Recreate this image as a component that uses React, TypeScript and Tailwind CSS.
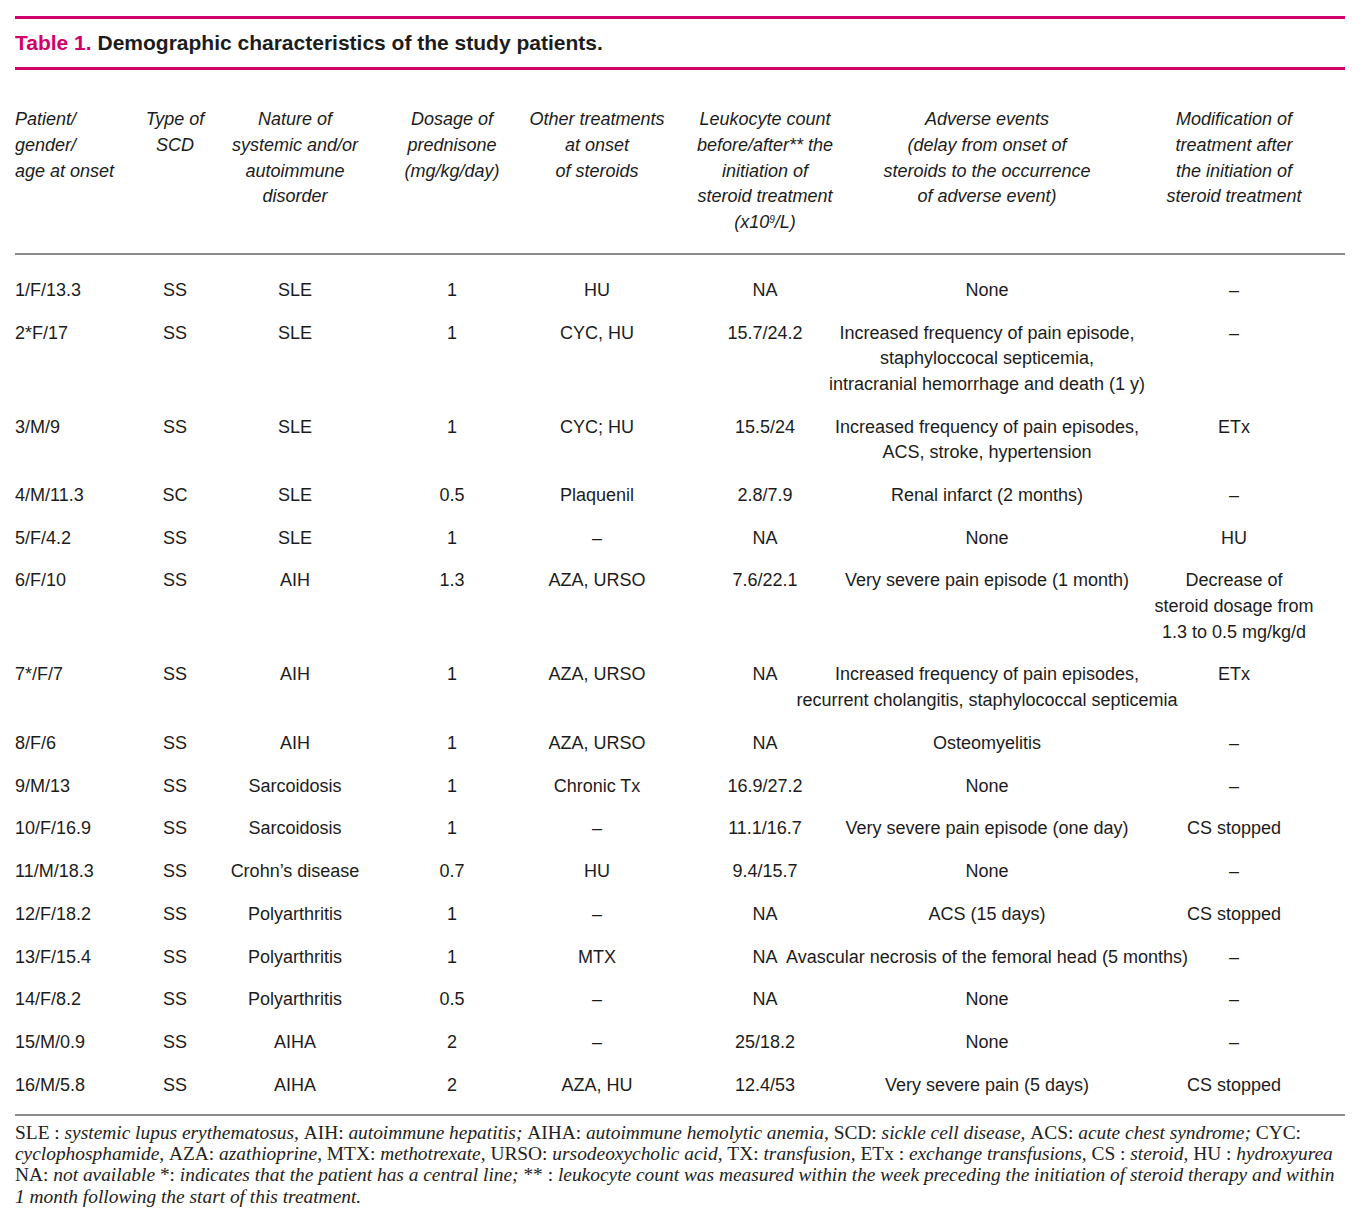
type Cell = string | string[];

const rows: Cell[][] = [
  ["1/F/13.3", "SS", "SLE", "1", "HU", "NA", "None", "–"],
  [
    "2*F/17",
    "SS",
    "SLE",
    "1",
    "CYC, HU",
    "15.7/24.2",
    ["Increased frequency of pain episode,", "staphyloccocal septicemia,", "intracranial hemorrhage and death (1 y)"],
    "–",
  ],
  [
    "3/M/9",
    "SS",
    "SLE",
    "1",
    "CYC; HU",
    "15.5/24",
    ["Increased frequency of pain episodes,", "ACS, stroke, hypertension"],
    "ETx",
  ],
  ["4/M/11.3", "SC", "SLE", "0.5", "Plaquenil", "2.8/7.9", "Renal infarct (2 months)", "–"],
  ["5/F/4.2", "SS", "SLE", "1", "–", "NA", "None", "HU"],
  [
    "6/F/10",
    "SS",
    "AIH",
    "1.3",
    "AZA, URSO",
    "7.6/22.1",
    "Very severe pain episode (1 month)",
    ["Decrease of", "steroid dosage from", "1.3 to 0.5 mg/kg/d"],
  ],
  [
    "7*/F/7",
    "SS",
    "AIH",
    "1",
    "AZA, URSO",
    "NA",
    ["Increased frequency of pain episodes,", "recurrent cholangitis, staphylococcal septicemia"],
    "ETx",
  ],
  ["8/F/6", "SS", "AIH", "1", "AZA, URSO", "NA", "Osteomyelitis", "–"],
  ["9/M/13", "SS", "Sarcoidosis", "1", "Chronic Tx", "16.9/27.2", "None", "–"],
  ["10/F/16.9", "SS", "Sarcoidosis", "1", "–", "11.1/16.7", "Very severe pain episode (one day)", "CS stopped"],
  ["11/M/18.3", "SS", "Crohn’s disease", "0.7", "HU", "9.4/15.7", "None", "–"],
  ["12/F/18.2", "SS", "Polyarthritis", "1", "–", "NA", "ACS (15 days)", "CS stopped"],
  ["13/F/15.4", "SS", "Polyarthritis", "1", "MTX", "NA", "Avascular necrosis of the femoral head (5 months)", "–"],
  ["14/F/8.2", "SS", "Polyarthritis", "0.5", "–", "NA", "None", "–"],
  ["15/M/0.9", "SS", "AIHA", "2", "–", "25/18.2", "None", "–"],
  ["16/M/5.8", "SS", "AIHA", "2", "AZA, HU", "12.4/53", "Very severe pain (5 days)", "CS stopped"],
];

// column template shared by header and body
const cols = "grid grid-cols-[120px_80px_160px_154px_136px_200px_244px_236px]";

function Lines({ value }: { value: Cell }) {
  const lines = Array.isArray(value) ? value : [value];
  return (
    <>
      {lines.map((l, i) => (
        <span key={i} className="whitespace-nowrap">
          {l}
        </span>
      ))}
    </>
  );
}

function cellClass(i: number) {
  if (i === 0) return "flex flex-col items-start";
  if (i === 7) return "flex flex-col items-center pl-[14px]";
  return "flex flex-col items-center";
}

export default function App() {
  return (
    <div className="min-h-[1231px] w-[1368px] bg-white text-[#1c1c1c] font-['Liberation_Sans',Arial,sans-serif]">
      <div className="ml-[15px] w-[1330px] pt-[16px]">
        {/* Title */}
        <div className="h-[3px] bg-[#d1006b]" />
        <h1 className="text-[21px] leading-[48px] font-semibold">
          <span className="text-[#d1006b]">Table 1.</span> Demographic characteristics of the study patients.
        </h1>
        <div className="h-[3px] bg-[#d1006b]" />

        {/* Header */}
        <div className={`${cols} pt-[37px] pb-[17px] text-[18px] leading-[25.75px] italic`}>
          <div className={cellClass(0)}>
            <Lines value={["Patient/", "gender/", "age at onset"]} />
          </div>
          <div className={cellClass(1)}>
            <Lines value={["Type of", "SCD"]} />
          </div>
          <div className={cellClass(2)}>
            <Lines value={["Nature of", "systemic and/or", "autoimmune", "disorder"]} />
          </div>
          <div className={cellClass(3)}>
            <Lines value={["Dosage of", "prednisone", "(mg/kg/day)"]} />
          </div>
          <div className={cellClass(4)}>
            <Lines value={["Other treatments", "at onset", "of steroids"]} />
          </div>
          <div className={cellClass(5)}>
            <Lines value={["Leukocyte count", "before/after** the", "initiation of", "steroid treatment"]} />
            <span className="whitespace-nowrap">
              (x10<sup className="text-[10px]">9</sup>/L)
            </span>
          </div>
          <div className={cellClass(6)}>
            <Lines value={["Adverse events", "(delay from onset of", "steroids to the occurrence", "of adverse event)"]} />
          </div>
          <div className={cellClass(7)}>
            <Lines value={["Modification of", "treatment after", "the initiation of", "steroid treatment"]} />
          </div>
        </div>
        <div className="h-[2px] bg-[#8c8c8c]" />

        {/* Body */}
        <div className={`${cols} gap-y-[17.2px] pt-[23px] pb-[15px] text-[18px] leading-[25.6px]`}>
          {rows.map((row, r) =>
            row.map((c, i) => (
              <div key={`${r}-${i}`} className={cellClass(i)}>
                <Lines value={c} />
              </div>
            ))
          )}
        </div>
        <div className="h-[2px] bg-[#8c8c8c]" />

        {/* Footnote */}
        <p className="pt-[6px] text-[19.4px] leading-[21.3px] text-[#222] font-['Liberation_Serif','Times_New_Roman',serif]">
          <span className="whitespace-nowrap">
            SLE : <i>systemic lupus erythematosus, </i>AIH: <i>autoimmune hepatitis; </i>AIHA:{" "}
            <i>autoimmune hemolytic anemia, </i>SCD: <i>sickle cell disease, </i>ACS: <i>acute chest syndrome; </i>CYC:
          </span>
          <br />
          <span className="whitespace-nowrap">
            <i>cyclophosphamide, </i>AZA: <i>azathioprine, </i>MTX: <i>methotrexate, </i>URSO:{" "}
            <i>ursodeoxycholic acid, </i>TX: <i>transfusion, </i>ETx : <i>exchange transfusions, </i>CS :{" "}
            <i>steroid, </i>HU : <i>hydroxyurea</i>
          </span>
          <br />
          <span className="whitespace-nowrap">
            NA: <i>not available </i>*: <i>indicates that the patient has a central line; </i>** :{" "}
            <i>leukocyte count was measured within the week preceding the initiation of steroid therapy and within</i>
          </span>
          <br />
          <span className="whitespace-nowrap">
            <i>1 month following the start of this treatment.</i>
          </span>
        </p>
      </div>
    </div>
  );
}
